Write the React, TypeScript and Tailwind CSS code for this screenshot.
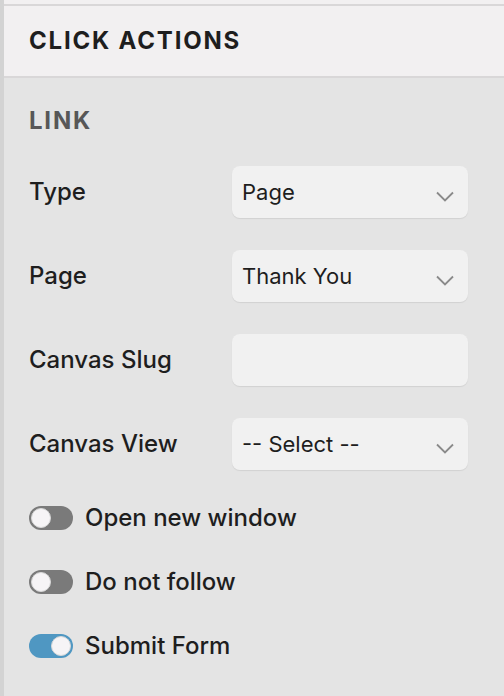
const selects = [
  { label: "Type", value: "Page", select: true },
  { label: "Page", value: "Thank You", select: true },
  { label: "Canvas Slug", value: "", select: false },
  { label: "Canvas View", value: "-- Select --", select: true },
];

const toggles = [
  { label: "Open new window", on: false },
  { label: "Do not follow", on: false },
  { label: "Submit Form", on: true },
];

function Toggle({ on }: { on: boolean }) {
  return (
    <div
      className={`w-[44px] h-[24px] rounded-full flex items-center px-[2px] ${
        on ? "bg-[#4f97c2] justify-end" : "bg-[#7a7a7a] justify-start"
      }`}
    >
      <div className="w-[20px] h-[20px] rounded-full bg-[#f6f4f6] border border-[#d8d8d8]" />
    </div>
  );
}

export default function App() {
  return (
    <div className="w-[504px] h-[696px] bg-[#e4e4e4] flex font-['Inter',sans-serif] text-[#1e1e1e]">
      <div className="w-[4px] bg-[#d3d3d3]" />
      <div className="flex-1 flex flex-col">
        <div className="h-[4px] bg-[#f2f0f1]" />
        <div className="h-[74px] border-y-2 border-[#d9d7d8] bg-[#f2f0f1] flex items-center px-[25px]">
          <h2 className="text-[24px] font-bold tracking-[0.075em] leading-none">CLICK ACTIONS</h2>
        </div>

        <div className="pl-[25px] pt-[31px] pr-[36px]">
          <h3 className="text-[24px] leading-[24px] font-bold tracking-[0.075em] text-[#575757]">LINK</h3>

          <div className="mt-[33px] flex flex-col gap-[32px]">
            {selects.map((s, i) => (
              <div key={i} className="flex items-center">
                <span className="w-[203px] text-[24px] font-medium">{s.label}</span>
                <div className="flex-1 h-[52px] rounded-[8px] bg-[#f1f1f1] shadow-[0_1px_1px_rgba(0,0,0,0.08)] flex items-center pl-[10px] pr-[14px]">
                  <span className="flex-1 text-[22px]">{s.value}</span>
                  {s.select && (
                    <svg width="18" height="11" viewBox="0 0 18 11" className="mt-[8px]" fill="none">
                      <polyline points="1,1.5 9,9.5 17,1.5" stroke="#8a8a8a" strokeWidth="1.8" />
                    </svg>
                  )}
                </div>
              </div>
            ))}
          </div>

          <div className="mt-[36px] flex flex-col gap-[40px]">
            {toggles.map((t, i) => (
              <div key={i} className="flex items-center gap-[12px] h-[24px]">
                <Toggle on={t.on} />
                <span className="text-[24px] font-medium">{t.label}</span>
              </div>
            ))}
          </div>
        </div>
      </div>
    </div>
  );
}
